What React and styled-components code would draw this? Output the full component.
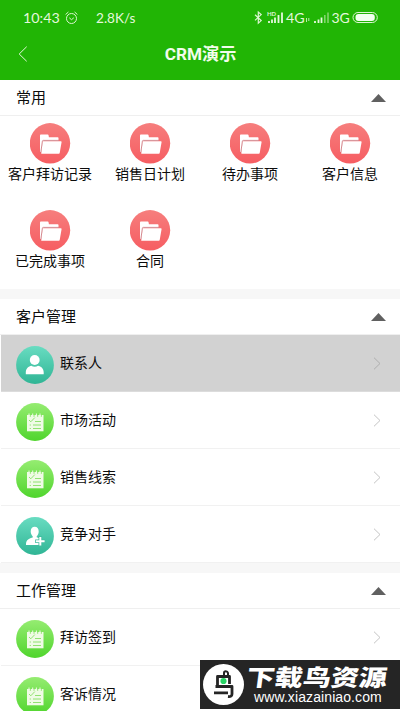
import React from "react";
import styled, { createGlobalStyle } from "styled-components";

const Global = createGlobalStyle`
  * { box-sizing: border-box; }
  body { margin: 0; background: #fff; overflow: hidden; }
`;
const Screen = styled.div`
  position: relative;
  width: 400px;
  height: 711px;
  overflow: hidden;
  background: #fff;
  color: #0c0c0c;
  font-family: Roboto, "Noto Sans CJK SC", sans-serif;
`;
const Header = styled.header`
  height: 80px;
  background: #21b505;
  color: #e4f8dc;
`;
const StatusBar = styled.div`
  height: 36px;
  padding: 0 22px 1px 23px;
  display: flex;
  align-items: center;
  font: 14px/34px Lato, sans-serif;
`;
const Clock = styled.span`
  width: 42px;
  font-size: 14.3px;
`;
const Speed = styled.span`
  margin-left: 18px;
  flex: 1;
  font-size: 13.6px;
`;
const StatusIcons = styled.svg`
  display: block;
  width: 124px;
  height: 20px;
`;
const TitleBar = styled.div`
  height: 36px;
  display: grid;
  grid-template-columns: 48px 1fr 48px;
  align-items: center;
  svg { margin-left: 18px; display: block; }
`;
const Title = styled.h1`
  margin: 0;
  padding-left: 1px;
  text-align: center;
  font: 700 17.2px/24px Roboto, "Noto Sans CJK SC", sans-serif;
  color: #f2fcec;
`;
const SectionHead = styled.div`
  height: 36px;
  padding: 0 14px 0 16px;
  display: flex;
  align-items: center;
  justify-content: space-between;
  font-size: 15px;
  line-height: 22px;
  border-bottom: 1px solid #efefef;
`;
const Gap = styled.div`
  height: 10px;
  background: #f7f7f7;
`;
const Shortcuts = styled.div`
  height: 173px;
  display: grid;
  grid-template-columns: repeat(4, 100px);
  grid-auto-rows: 87px;
  padding-top: 7px;
`;
const Shortcut = styled.div`
  display: flex;
  flex-direction: column;
  align-items: center;
  font-size: 14px;
  line-height: 20px;
  svg { display: block; }
`;
const Row = styled.div`
  height: 57px;
  margin-left: 1px;
  padding: 4px 19px 0 15px;
  display: flex;
  align-items: center;
  background: ${(p) => (p.$active ? "#d2d2d2" : "#fff")};
  border-bottom: 1px solid ${(p) => (p.$active ? "#dcdcdc" : "#f1f1f1")};
  svg { display: block; flex: none; }
`;
const RowLabel = styled.span`
  flex: 1;
  padding: 0 0 4px 6px;
  font-size: 14px;
  line-height: 20px;
`;
const Chevron = styled.svg`
  margin-bottom: 3px;
`;
const Watermark = styled.aside`
  position: absolute;
  left: 200px;
  top: 660px;
  width: 200px;
  height: 49px;
  padding: 0 0 0 3px;
  display: flex;
  align-items: center;
  background: #252525;
  color: #fff;
`;
const Brand = styled.div`
  margin-left: 3px;
  display: flex;
  flex-direction: column;
`;
const BrandName = styled.strong`
  font: 900 23px/25px "Noto Sans CJK SC", sans-serif;
  width: 115px;
  white-space: nowrap;
  transform-origin: left center;
  transform: scaleX(1.22) skewX(-6deg);
`;
const BrandUrl = styled.span`
  margin-left: 7px;
  font: 14px/17px "Liberation Sans", sans-serif;
  letter-spacing: 0.1px;
`;

const Triangle = () => (
  <svg width="15" height="8" viewBox="0 0 15 8"><path d="M0 8 7.5 0 15 8Z" fill="#606060" /></svg>
);

const FolderIcon = () => (
  <svg width="41" height="41" viewBox="0 0 41 41">
    <defs><linearGradient id="red" x2="0" y2="1"><stop stopColor="#f67e7d" /><stop offset="1" stopColor="#f65d62" /></linearGradient></defs>
    <circle cx="20" cy="20.3" r="20.2" fill="url(#red)" />
    <path d="M10 29V12.4q0-.8.8-.8h6.9q.8 0 .9.8l.3 1.8h8.8q.8 0 .8.8v3H13.2l-1.8 11Z" fill="#fff" />
    <path d="M13.4 18.2h17.4q.9 0 .8.9l-1.9 10.9q-.1.8-.9.8H12q-.9 0-.8-.9l1.4-10.9q.1-.8.8-.8Z" fill="#fff" />
    <path d="M10.8 29.5 12.4 18.2q.1-.8.9-.8h15.6" fill="none" stroke="#c96c74" strokeWidth=".8" />
  </svg>
);

const Disc = ({ green, children }) => (
  <svg width="38" height="38" viewBox="0 0 38 38">
    <defs>
      <linearGradient id="green" x2="0" y2="1"><stop stopColor="#95ec71" /><stop offset="1" stopColor="#50d52d" /></linearGradient>
      <linearGradient id="teal" x2="0" y2="1"><stop stopColor="#68dcc1" /><stop offset="1" stopColor="#30b595" /></linearGradient>
    </defs>
    <circle cx="19" cy="19" r="18.9" fill={green ? "url(#green)" : "url(#teal)"} />
    {children}
  </svg>
);

const ICONS = {
  person: (
    <Disc><g fill="#fff"><circle cx="18.7" cy="14" r="4.9" /><path d="M9.8 28.2v-1.6c0-4.2 2.8-6.2 5.6-6.8 1.8 1.2 4.8 1.2 6.6 0 3 .6 5.7 2.6 5.7 6.8v1.6Z" /></g></Disc>
  ),
  list: (
    <Disc green>
      <path d="M11 12h16.5v16.3H11Z" fill="#effbe5" />
      <g fill="none" stroke="#84df63" strokeWidth=".9">
        <path d="M13.7 22h1.2M17 22h8M13.7 25.5h1.2M17 25.5h8M19 18.5h6M13 17l1.8 1.8 4-4.2" />
        <path d="M14.3 11.5v2.3M18 11.5v2.3M21.7 11.5v2.3M25.3 11.5v2.3" />
      </g>
      <path d="M13 13.3v-2.8M16.7 13.3v-2.8M20.4 13.3v-2.8M24 13.3v-2.8" stroke="#effbe5" strokeWidth="1" />
    </Disc>
  ),
  add: (
    <Disc>
      <path d="M14.7 14.5c0-3 1.5-4.7 4-4.7s4 1.7 4 4.7c0 2-1 4-2 4.8v1l4.4 1.8v6H10c0-4.2 1.2-6 6.7-7.6v-1.2c-1-.9-2-2.7-2-4.8Z" fill="#fff" />
      <path d="M24.3 19v10.5M19.2 24.3h9.8" stroke="#42bda0" strokeWidth="3.6" />
      <path d="M24.3 20v8.6M20 24.3h8.6" stroke="#fff" strokeWidth="2" />
    </Disc>
  ),
};

function MenuRow({ label, icon, active }) {
  return (
    <Row $active={active}>
      {ICONS[icon]}
      <RowLabel>{label}</RowLabel>
      <Chevron width="8" height="13" viewBox="0 0 8 13"><path d="m1 .7 6 5.8-6 5.8" fill="none" stroke={active ? "#aaa" : "#bdbdbd"} strokeWidth=".9" /></Chevron>
    </Row>
  );
}

function Section({ title, children }) {
  return <section><SectionHead><span>{title}</span><Triangle /></SectionHead>{children}</section>;
}

const shortcuts = ["客户拜访记录", "销售日计划", "待办事项", "客户信息", "已完成事项", "合同"];

export default function App() {
  return (
    <Screen>
      <Global />
      <Header>
        <StatusBar>
          <Clock>10:43</Clock>
          <svg width="13" height="14" viewBox="0 0 13 14" fill="none" stroke="#dcf6d2"><circle cx="6.5" cy="7.5" r="5" /><path d="M4.3 6.8 6.5 8.7l2.3-1.9M.6 3.5 3.4 1M9.6 1l2.8 2.5" /></svg>
          <Speed>2.8K/s</Speed>
          <StatusIcons viewBox="254 8 124 20">
            <path d="m255 14.8 6.2 5.8-2.9 2.6V12l2.9 2.6-6.2 5.8" fill="none" stroke="#dcf6d2" strokeWidth="1.2" />
            <text x="267" y="16" fontSize="6" fontWeight="700" fontFamily="Lato" fill="#dcf6d2">HD</text>
            <path d="M269 23v-2M272 23v-3.5M275 23v-5.5M278.5 23v-8M282 23V12.5" stroke="#e4f8dc" strokeWidth="1.8" />
            <text x="286" y="23" fontSize="14.3" fontFamily="Lato" fill="#e4f8dc">4G</text>
            <path d="M306.5 18v4M308.8 18v3" stroke="#bdeab0" />
            <path d="M315 23v-2M318.5 23v-3.5M321.5 23v-5.5" stroke="#e4f8dc" strokeWidth="1.8" />
            <path d="M324.8 23v-8M328 23V12.5" stroke="#82d56c" strokeWidth="1.6" />
            <text x="331.5" y="23" fontSize="14" fontFamily="Lato" fill="#e4f8dc">3G</text>
            <rect x="353" y="12.5" width="24.3" height="10" rx="5" fill="none" stroke="#dcf6d2" />
            <rect x="355.5" y="14" width="19.3" height="7" rx="3" fill="#f2fff0" />
          </StatusIcons>
        </StatusBar>
        <TitleBar>
          <svg width="10" height="16" viewBox="0 0 10 16"><path d="M8.7.7 1.2 8l7.5 7.3" fill="none" stroke="#e4f8dc" strokeWidth="1" /></svg>
          <Title>CRM演示</Title>
        </TitleBar>
      </Header>
      <Section title="常用">
        <Shortcuts>
          {shortcuts.map((name) => <Shortcut key={name}><FolderIcon />{name}</Shortcut>)}
        </Shortcuts>
      </Section>
      <Gap />
      <Section title="客户管理">
        <MenuRow label="联系人" icon="person" active />
        <MenuRow label="市场活动" icon="list" />
        <MenuRow label="销售线索" icon="list" />
        <MenuRow label="竞争对手" icon="add" />
      </Section>
      <Gap />
      <Section title="工作管理">
        <MenuRow label="拜访签到" icon="list" />
        <MenuRow label="客诉情况" icon="list" />
      </Section>
      <Watermark>
        <svg width="41" height="41" viewBox="0 0 41 41">
          <circle cx="20.5" cy="20.5" r="20.5" fill="#fff" />
          <g fill="none" stroke="#252525" strokeWidth="2.8" strokeLinejoin="round">
            <path d="M14.5 22V12.5h12V20M12.5 22.5H29v7.5q0 3-4 2.5M11 28.8h14" />
            <path d="M21 11.5V9q0-1.8 1.8-1.8T25 9v2.5" strokeWidth="2" />
          </g>
          <circle cx="20.5" cy="17" r="3.1" fill="#28d565" />
        </svg>
        <Brand><BrandName>下载鸟资源</BrandName><BrandUrl>www.xiazainiao.com</BrandUrl></Brand>
      </Watermark>
    </Screen>
  );
}
